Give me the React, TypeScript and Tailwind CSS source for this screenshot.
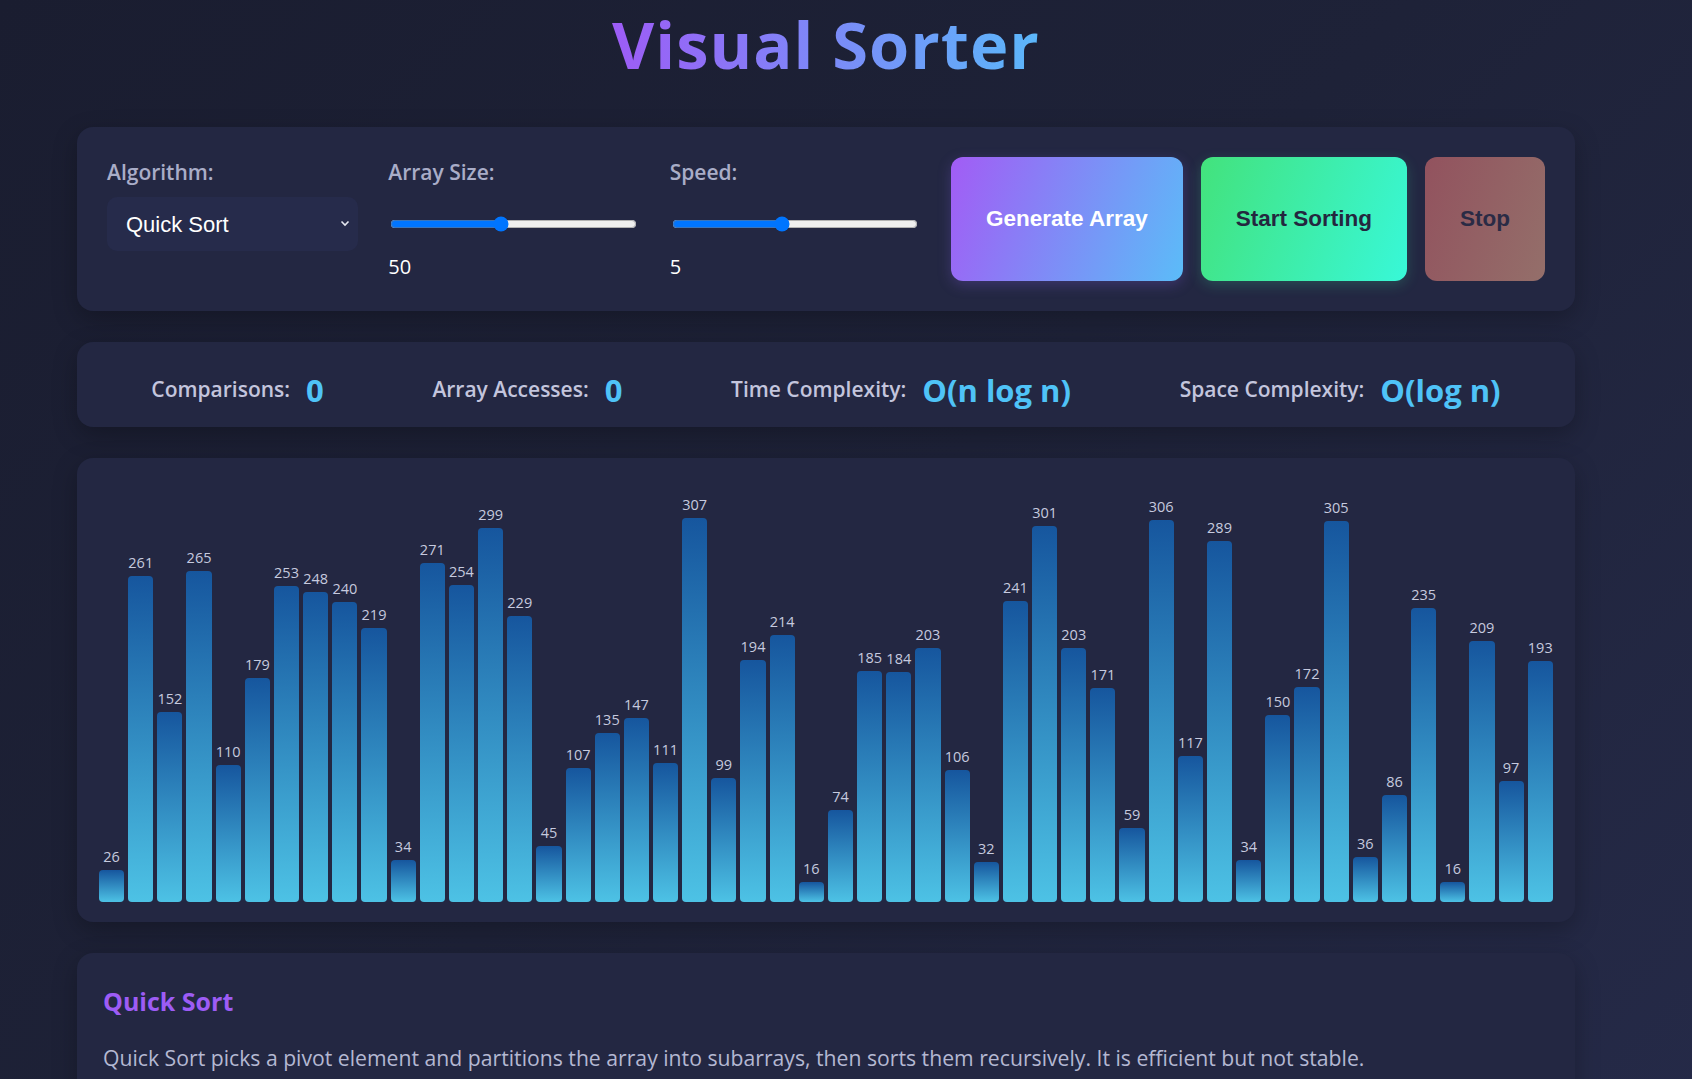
import { useState } from 'react'

const VALUES = [
  26, 261, 152, 265, 110, 179, 253, 248, 240, 219, 34, 271, 254, 299, 229, 45, 107, 135, 147, 111, 307, 99, 194, 214, 16,
  74, 185, 184, 203, 106, 32, 241, 301, 203, 171, 59, 306, 117, 289, 34, 150, 172, 305, 36, 86, 235, 16, 209, 97, 193,
]

function Stat({ label, value }: { label: string, value: string }) {
  return (
    <div className="flex items-center gap-[16px]">
      <span className="text-[21px] font-semibold text-[#c3c5dd]">{label}</span>
      <span className="text-[31px] font-bold text-[#4fc3f7]">{value}</span>
    </div>
  )
}

export default function App() {
  const [size, setSize] = useState(50)
  const [speed, setSpeed] = useState(5)

  return (
    <div className="min-h-screen bg-[linear-gradient(135deg,#1a1d30_0%,#1e2238_50%,#252a48_100%)] font-['Open_Sans','Noto_Sans',sans-serif] text-white">
      <div className="ml-[77px] w-[1498px] pb-10">
        <h1 className="text-center text-[65px] font-bold leading-[88px] tracking-[1px]">
          <span className="bg-[linear-gradient(90deg,#9d5cf6,#5bb7fa)] bg-clip-text text-transparent">Visual Sorter</span>
        </h1>

        <div className="mt-[39px] flex flex-col gap-[31px]">
          {/* controls */}
          <div className="rounded-[16px] bg-[#232742] p-[30px] shadow-[0_8px_24px_rgba(0,0,0,0.25)]">
            <div className="flex items-stretch gap-[30px]">
              <div className="flex flex-1 flex-col">
                <label className="mb-[10px] text-[21px] leading-[30px] font-semibold text-[#a9adc8]">Algorithm:</label>
                <div className="relative h-[54px] rounded-[10px] bg-[#262b4b]">
                  <select className="h-full w-full appearance-none bg-transparent pl-[19px] font-['Liberation_Sans',Arial,sans-serif] text-[22px] text-white outline-none">
                    <option className="bg-[#262b4b]">Quick Sort</option>
                    <option className="bg-[#262b4b]">Bubble Sort</option>
                    <option className="bg-[#262b4b]">Merge Sort</option>
                  </select>
                  <svg className="pointer-events-none absolute top-[23px] right-[8px]" width="10" height="7" viewBox="0 0 10 7">
                    <path d="M1.5 1.5 L5 5 L8.5 1.5" fill="none" stroke="#e5e7f0" strokeWidth="1.6" />
                  </svg>
                </div>
              </div>
              <div className="flex flex-1 flex-col">
                <label className="mb-[10px] text-[21px] leading-[30px] font-semibold text-[#a9adc8]">Array Size:</label>
                <div className="flex h-[54px] items-center pl-[2px] pr-[3px]">
                  <input type="range" min={10} max={100} value={size} onChange={e => setSize(Number(e.target.value))} className="w-full" />
                </div>
                <span className="pt-[2px] text-[20px] leading-[28px]">{size}</span>
              </div>
              <div className="flex flex-1 flex-col">
                <label className="mb-[10px] text-[21px] leading-[30px] font-semibold text-[#a9adc8]">Speed:</label>
                <div className="flex h-[54px] items-center pl-[2px] pr-[3px]">
                  <input type="range" min={1} max={10} value={speed} onChange={e => setSpeed(Number(e.target.value))} className="w-full" />
                </div>
                <span className="pt-[2px] text-[20px] leading-[28px]">{speed}</span>
              </div>
              <div className="flex gap-[18px]">
                <button className="rounded-[12px] bg-[linear-gradient(110deg,#a25cf5,#5bbcf8)] px-[35px] font-['Liberation_Sans',Arial,sans-serif] text-[22.5px] font-bold text-white shadow-[0_4px_14px_rgba(140,100,240,0.25)]">
                  Generate Array
                </button>
                <button className="rounded-[12px] bg-[linear-gradient(110deg,#43e27c,#38f8d8)] px-[35px] font-['Liberation_Sans',Arial,sans-serif] text-[22.5px] font-bold text-[#24273f] shadow-[0_4px_14px_rgba(60,230,160,0.2)]">
                  Start Sorting
                </button>
                <button className="rounded-[12px] bg-[linear-gradient(110deg,#92525e,#946f6a)] px-[35px] font-['Liberation_Sans',Arial,sans-serif] text-[22.5px] font-bold text-[#2a2b45]">
                  Stop
                </button>
              </div>
            </div>
          </div>

          {/* stats */}
          <div className="flex h-[85px] items-center justify-around rounded-[16px] bg-[#232742] px-5 pt-[11px] shadow-[0_8px_24px_rgba(0,0,0,0.25)]">
            <Stat label="Comparisons:" value="0" />
            <Stat label="Array Accesses:" value="0" />
            <Stat label="Time Complexity:" value="O(n log n)" />
            <Stat label="Space Complexity:" value="O(log n)" />
          </div>

          {/* bars */}
          <div className="rounded-[16px] bg-[#232742] p-5 shadow-[0_8px_24px_rgba(0,0,0,0.25)]">
            <div className="flex h-[424px] items-end">
              {VALUES.map((v, i) => (
                <div key={i} className="relative mx-[2px] flex-1 rounded-[4px] bg-[linear-gradient(to_bottom,#16569e,#4dc2e5)]" style={{ height: v * 1.25 }}>
                  <span className="absolute bottom-full left-1/2 mb-[3px] -translate-x-1/2 text-[14.5px] leading-[20px] text-[#c6cadf]">{v}</span>
                </div>
              ))}
            </div>
          </div>

          {/* info */}
          <div className="rounded-[16px] bg-[#232742] px-[26px] pt-[32px] pb-[30px] shadow-[0_8px_24px_rgba(0,0,0,0.25)]">
            <h3 className="text-[25px] leading-[32px] font-bold text-[#9d5cf5]">Quick Sort</h3>
            <p className="mt-[25px] text-[21.2px] leading-[31px] text-[#b4b8d2]">
              Quick Sort picks a pivot element and partitions the array into subarrays, then sorts them recursively. It is efficient but not stable.
            </p>
          </div>
        </div>
      </div>
    </div>
  )
}
